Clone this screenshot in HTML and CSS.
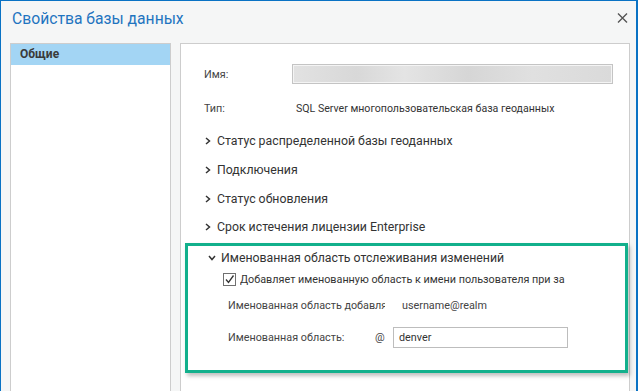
FILE: index.html
```html
<!DOCTYPE html>
<html>
<head>
  <title>Свойства базы данных</title>
<link rel="stylesheet" href="styles.css">
</head>
<body>
  <div class="window">
    <div class="title_bar">
      <span class="title">Свойства базы данных</span>
      <svg class="close" width="11" height="10" viewBox="0 0 11 10">
        <path d="M1 0.5 L10 9.5 M10 0.5 L1 9.5" stroke="#555" stroke-width="1.4" fill="none"/>
      </svg>
    </div>
    <div class="body">
      <div class="side">
        <div class="side_item sel">Общие</div>
      </div>
      <div class="panel">
        <div class="row row_name">
          <span class="lbl">Имя:</span>
          <div class="name_box"></div>
        </div>
        <div class="row row_type">
          <span class="lbl">Тип:</span>
          <span class="type_val">SQL Server многопользовательская база геоданных</span>
        </div>
        <div class="grp">
          <svg class="chev" width="6" height="8" viewBox="0 0 6 8"><path d="M1 1 L4.5 4 L1 7" stroke="#333" stroke-width="1.5" fill="none"/></svg>
          <span>Статус распределенной базы геоданных</span>
        </div>
        <div class="grp">
          <svg class="chev" width="6" height="8" viewBox="0 0 6 8"><path d="M1 1 L4.5 4 L1 7" stroke="#333" stroke-width="1.5" fill="none"/></svg>
          <span>Подключения</span>
        </div>
        <div class="grp">
          <svg class="chev" width="6" height="8" viewBox="0 0 6 8"><path d="M1 1 L4.5 4 L1 7" stroke="#333" stroke-width="1.5" fill="none"/></svg>
          <span>Статус обновления</span>
        </div>
        <div class="grp">
          <svg class="chev" width="6" height="8" viewBox="0 0 6 8"><path d="M1 1 L4.5 4 L1 7" stroke="#333" stroke-width="1.5" fill="none"/></svg>
          <span>Срок истечения лицензии Enterprise</span>
        </div>
        <div class="realm">
          <div class="grp grp_open">
            <svg class="chev_dn" width="8" height="6" viewBox="0 0 8 6"><path d="M1 1 L4 4.5 L7 1" stroke="#333" stroke-width="1.5" fill="none"/></svg>
            <span>Именованная область отслеживания изменений</span>
          </div>
          <div class="chk_row">
            <svg class="chk" width="13" height="13" viewBox="0 0 13 13">
              <rect x="0.5" y="0.5" width="12" height="12" fill="#fff" stroke="#707070"/>
              <path d="M3 6.5 L5.5 9.5 L10.5 2.5" stroke="#333" stroke-width="1.3" fill="none"/>
            </svg>
            <span class="chk_txt">Добавляет именованную область к имени пользователя при за</span>
          </div>
          <div class="realm_row">
            <span class="realm_lbl">Именованная область добавля</span>
            <span>username@realm</span>
          </div>
          <div class="realm_row realm_inp">
            <span class="realm_lbl">Именованная область:</span>
            <span class="at">@</span>
            <div class="inp">denver</div>
          </div>
        </div>
      </div>
    </div>
  </div>
</body>
</html>
```
FILE: styles.css
```css
body {
  margin: 0;
  background: #fff;
  font-family: Roboto, "Open Sans", sans-serif;
  color: #333;
}
.window {
  width: 635px;
  height: 390px;
  border: 1px solid #0a72c4;
  border-right-width: 2px;
  border-bottom: none;
  background-color: #f5f6f6;
  overflow: hidden;
}
.title_bar {
  height: 42px;
  display: flex;
  align-items: flex-start;
  justify-content: space-between;
}
.title {
  margin-left: 11px;
  margin-top: 8px;
  font-size: 15.7px;
  color: #1f74c0;
}
.close {
  margin-top: 12px;
  margin-right: 8px;
}
.body {
  display: flex;
  gap: 9px;
  padding-left: 9px;
  height: 348px;
}
.side {
  width: 159px;
  border: 1px solid #cdcdcd;
  border-bottom: none;
  background-color: #fff;
}
.side_item {
  height: 21px;
  line-height: 21px;
  padding-left: 9px;
  font-size: 12px;
  font-weight: bold;
  color: #3a3a3a;
}
.sel {
  background-color: #a3d5f4;
}
.panel {
  width: 448px;
  border: 1px solid #cdcdcd;
  border-bottom: none;
  background-color: #fff;
  padding-top: 20px;
}
.row {
  display: flex;
  align-items: center;
  padding-left: 23px;
  font-size: 10.8px;
  color: #444;
}
.row_name {
  height: 20px;
}
.lbl {
  width: 88px;
}
.name_box {
  width: 319px;
  height: 18px;
  border: 1px solid #c4c4c4;
  background: linear-gradient(90deg, #e2e2e2, #d8d8d8 20%, #e4e4e4 35%, #d6d6d6 55%, #e0e0e0 75%, #dadada);
  box-shadow: inset 0 0 0 1px #f4f4f4;
}
.row_type {
  height: 28px;
  margin-top: 10px;
  margin-bottom: 5px;
}
.type_val {
  margin-left: 4px;
  font-size: 10.6px;
  color: #333;
}
.grp {
  display: flex;
  align-items: center;
  height: 28.7px;
  padding-left: 24px;
  font-size: 12.3px;
  color: #333;
}
.chev {
  margin-right: 6px;
}
.realm {
  margin-left: 4px;
  margin-right: 1px;
  margin-top: 1px;
  border: 3px solid #12b08c;
  height: 124px;
  box-shadow: 2px 3px 4px rgba(0, 0, 0, 0.25);
}
.grp_open {
  padding-left: 20px;
  height: 22px;
  margin-top: 1px;
}
.chev_dn {
  margin-right: 5px;
}
.chk_row {
  display: flex;
  align-items: center;
  height: 22px;
  padding-left: 35px;
  font-size: 10.8px;
  color: #333;
}
.chk {
  margin-right: 4px;
}
.chk_txt {
  width: 325px;
  white-space: nowrap;
  overflow: hidden;
}
.realm_row {
  display: flex;
  align-items: center;
  height: 30px;
  padding-left: 40px;
  font-size: 10.8px;
  color: #444;
}
.realm_lbl {
  width: 157px;
  margin-right: 17px;
  white-space: nowrap;
  overflow: hidden;
}
.realm_inp {
  margin-top: 2px;
}
.realm_inp .realm_lbl {
  width: 147px;
  margin-right: 0;
}
.at {
  width: 18px;
}
.inp {
  width: 168px;
  height: 19px;
  line-height: 19px;
  border: 1px solid #bdbdbd;
  padding-left: 5px;
  color: #333;
}
```
